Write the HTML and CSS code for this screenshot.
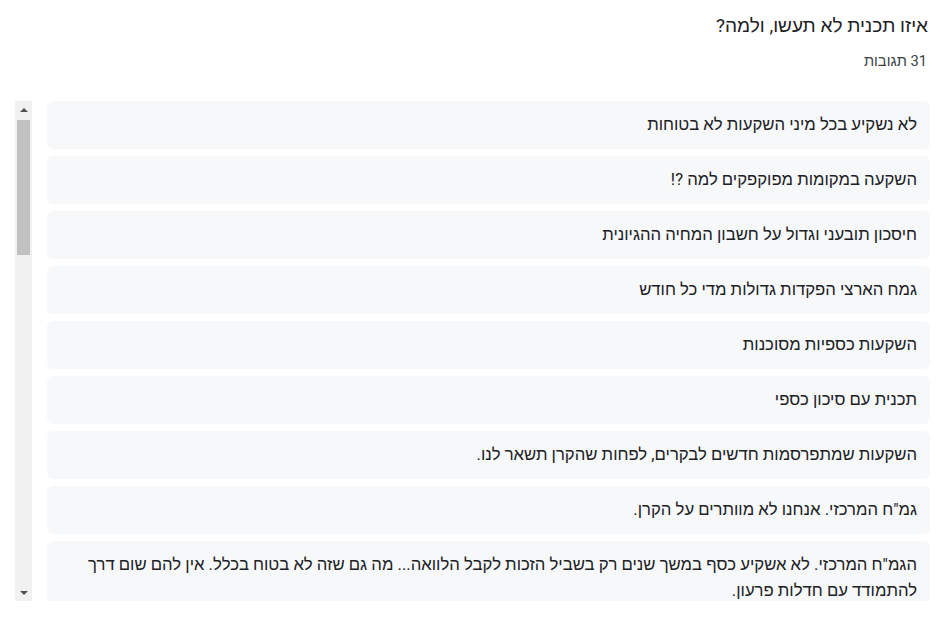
FILE: index.html
```html
<!DOCTYPE html>
<html lang="he" dir="rtl">
<head>
<meta charset="utf-8">
<title>איזו תכנית לא תעשו, ולמה?</title>
<link rel="stylesheet" href="styles.css">
</head>
<body>
<div class="page">
  <h1 class="title">איזו תכנית לא תעשו, ולמה?</h1>
  <div class="count">31 תגובות</div>
  <div class="list">
    <div class="viewport">
      <div class="card">לא נשקיע בכל מיני השקעות לא בטוחות</div>
      <div class="card">השקעה במקומות מפוקפקים למה ?!</div>
      <div class="card">חיסכון תובעני וגדול על חשבון המחיה ההגיונית</div>
      <div class="card">גמח הארצי הפקדות גדולות מדי כל חודש</div>
      <div class="card">השקעות כספיות מסוכנות</div>
      <div class="card">תכנית עם סיכון כספי</div>
      <div class="card">השקעות שמתפרסמות חדשים לבקרים, לפחות שהקרן תשאר לנו.</div>
      <div class="card">גמ"ח המרכזי. אנחנו לא מוותרים על הקרן.</div>
      <div class="card">הגמ"ח המרכזי. לא אשקיע כסף במשך שנים רק בשביל הזכות לקבל הלוואה... מה גם שזה לא בטוח בכלל. אין להם שום דרך להתמודד עם חדלות פרעון.</div>
    </div>
    <div class="scrollbar" aria-hidden="true">
      <div class="sb-button">
        <svg width="8" height="4" viewBox="0 0 8 4"><polygon points="0,4 8,4 4,0" fill="#505050"/></svg>
      </div>
      <div class="sb-track">
        <div class="sb-thumb"></div>
      </div>
      <div class="sb-button">
        <svg width="8" height="4" viewBox="0 0 8 4"><polygon points="0,0 8,0 4,4" fill="#505050"/></svg>
      </div>
    </div>
  </div>
</div>
</body>
</html>
```

FILE: styles.css
```css
html, body {
  margin: 0;
  padding: 0;
  background: #ffffff;
}

body {
  font-family: Roboto, "Liberation Sans", Arial, sans-serif;
  color: #202124;
}

.page {
  direction: rtl;
  padding: 14px 10px 0 15px;
}

.title {
  margin: 0;
  padding-right: 2px;
  font-size: 19px;
  font-weight: 400;
  line-height: 24px;
  color: #202124;
}

.count {
  margin-top: 13px;
  padding-right: 3px;
  font-size: 14.7px;
  line-height: 20px;
  color: #3c4043;
}

.list {
  margin-top: 30px;
  height: 500px;
  display: flex;
  flex-direction: row;
  gap: 15px;
}

.viewport {
  flex: 1;
  min-width: 0;
  overflow: hidden;
  display: flex;
  flex-direction: column;
  gap: 7px;
}

.scrollbar {
  flex: none;
  width: 17px;
  background: #f1f1f1;
  display: flex;
  flex-direction: column;
}

.sb-button {
  flex: none;
  height: 17px;
  display: flex;
  align-items: center;
  justify-content: center;
}

.sb-button svg {
  display: block;
}

.sb-track {
  flex: 1;
  padding: 2px 2px 0;
}

.sb-thumb {
  height: 135px;
  background: #c1c1c1;
}

.card {
  flex: none;
  background: #f7f8fa;
  border-radius: 6px;
  padding: 11px 13px 11px 14px;
  font-size: 16.7px;
  line-height: 26px;
  color: #202124;
}
```
